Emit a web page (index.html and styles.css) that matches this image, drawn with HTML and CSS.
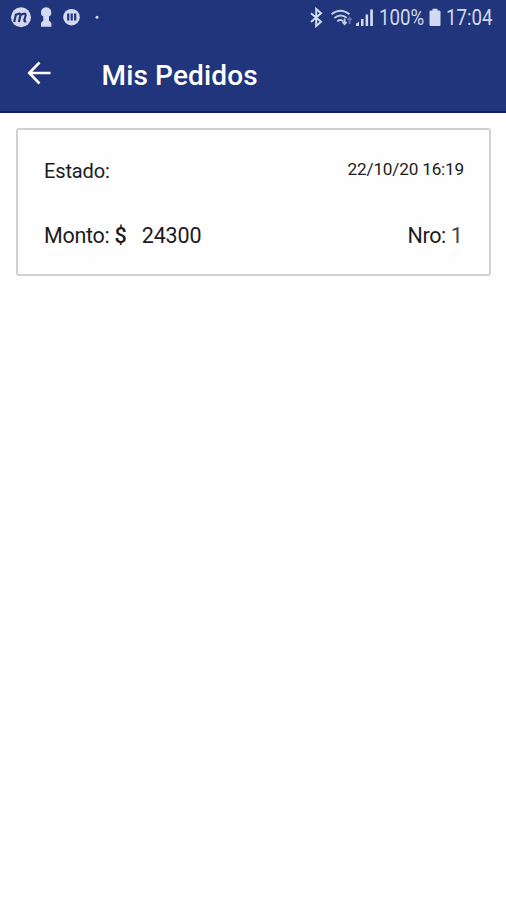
FILE: index.html
```html
<!DOCTYPE html>
<html lang="es">
<head>
<meta charset="utf-8">
<meta name="viewport" content="width=device-width, initial-scale=1">
<title>Mis Pedidos</title>
<link rel="stylesheet" href="styles.css">
</head>
<body>
<header class="header">
  <div class="status">
    <svg class="notifications" width="104" height="36" viewBox="0 0 104 36" aria-hidden="true">
      <g class="light">
        <circle cx="21" cy="17.3" r="10"/>
        <path d="M41 14a5.300 5.300 0 1 1 10.200 0q-.4 1.800-2.200 2.500v4.200q2.400 1 2.400 3.200v2.800H41v-2.800q0-2.200 2.300-3.200v-4.200Q41.500 15.800 41 14Z"/>
        <circle cx="71.500" cy="17.200" r="8.300"/>
        <circle cx="97" cy="17.200" r="1.500"/>
      </g>
      <g class="cut">
        <path d="M14.200 22l1.900-8.300M15.900 15q4.200-2.800 4.600-.2L18.900 22M20.700 15q5-2.900 5 .2L24.300 20q-.3 1.900 1.900 1.100"/>
        <path d="M68.200 13.500v7M71.700 13.500v7M75.200 13.500v7"/>
      </g>
    </svg>
    <div class="system">
      <svg width="80" height="36" viewBox="300 0 80 36" aria-hidden="true">
        <path class="line" d="M311 13.200l10 8.600-4.800 4.300V9l4.800 4.300-10 8.600"/>
        <g class="wifi">
          <path d="M331.500 14.200q8.800-7 18 0M334.300 18q6.300-5 12.400-.2M337.300 21.300q3.300-2.500 6 0"/>
          <path d="M344.600 18.500v5.500m-2-2l2 2.200 2-2.200"/>
          <path class="dim" d="M349.600 24v-6m-2 2l2-2.200 2 2.200"/>
        </g>
        <path class="light" d="M356 26v-2.300l3-2V26ZM361 26v-7h2.500v7ZM365.600 26V14.500h2.500V26ZM370.200 26V9.500h2.700V26Z"/>
      </svg>
      <span class="percent"><span class="narrow">100%</span></span>
      <svg class="battery" width="12" height="36" viewBox="0 0 12 36" aria-hidden="true"><path class="light" d="M3.500 8.800h5v1.800h1.800q1.200 0 1.200 1.200v13q0 1.200-1.200 1.200H1.700q-1.200 0-1.200-1.200v-13q0-1.200 1.200-1.200h1.800Z"/></svg>
      <span class="clock"><span class="narrow">17:04</span></span>
    </div>
  </div>
  <div class="toolbar">
    <button class="back" aria-label="Volver">
      <svg width="26" height="26" viewBox="0 0 26 26"><path d="M24.500 13H3.500M13.500 2.500L3.200 13 13.500 23.500"/></svg>
    </button>
    <h1 class="title">Mis Pedidos</h1>
  </div>
</header>
<main class="orders">
  <article class="order">
    <div class="row row-state">
      <span class="state">Estado:</span>
      <time class="date">22/10/20 16:19</time>
    </div>
    <div class="row row-amount">
      <span class="amount"><span class="label">Monto: <span class="currency">$</span></span><span>24300</span></span>
      <span class="number">Nro: <span class="value">1</span></span>
    </div>
  </article>
</main>
</body>
</html>
```
FILE: styles.css
```css
* {
  box-sizing: border-box;
}

body {
  margin: 0;
  min-height: 900px;
  background: #fefefe;
  color: #1c1c1c;
  font-family: Roboto, sans-serif;
}

.header {
  height: 113px;
  background: #20357c;
  border-bottom: 2px solid #111f69;
  color: #fff;
}

.status {
  display: flex;
  justify-content: space-between;
  height: 36px;
  padding-right: 12px;
  color: #d3d9ee;
}

.system {
  display: flex;
  font-size: 21.5px;
  line-height: 36px;
}

.percent {
  width: 44px;
  margin-left: -1px;
}

.battery {
  margin: 0 5px 0 6px;
}

.clock {
  width: 48px;
}

.narrow {
  display: inline-block;
  transform: scaleX(0.87);
  transform-origin: left;
}

.light {
  fill: #d3d9ee;
}

.cut {
  fill: none;
  stroke: #20357c;
  stroke-width: 2.2;
}

.line {
  fill: none;
  stroke: #d3d9ee;
  stroke-width: 2;
}

.wifi {
  fill: none;
  stroke: #c5cce5;
  stroke-width: 1.8;
}

.dim {
  stroke: #6674a8;
}

.toolbar {
  display: flex;
  align-items: center;
  height: 75px;
  padding-left: 26px;
}

.back {
  display: flex;
  margin-top: -1px;
  padding: 0;
  border: 0;
  background: none;
}

.back path {
  fill: none;
  stroke: #fff;
  stroke-width: 2.6;
}

.title {
  margin: 5px 0 0 49.5px;
  font-size: 28px;
  font-weight: 500;
  letter-spacing: 0.15px;
  line-height: 36px;
}

.orders {
  padding: 15px 15px 0 16px;
}

.order {
  height: 148px;
  padding: 26px 25px 0 26px;
  border: 2px solid #d2d2d2;
  border-radius: 3px;
}

.row {
  display: flex;
  justify-content: space-between;
}

.row-state {
  height: 65px;
}

.state {
  font-size: 20px;
  letter-spacing: -0.15px;
  line-height: 30px;
}

.date {
  font-size: 17.2px;
  letter-spacing: -0.2px;
  line-height: 26px;
}

.row-amount {
  font-size: 21.5px;
  letter-spacing: -0.1px;
  line-height: 30px;
}

.amount {
  display: flex;
  gap: 15.3px;
}

.label {
  letter-spacing: -0.3px;
}

.number {
  margin-right: 1.5px;
  letter-spacing: -0.4px;
}

.currency {
  font-weight: 500;
}

.value {
  color: #444;
}
```
